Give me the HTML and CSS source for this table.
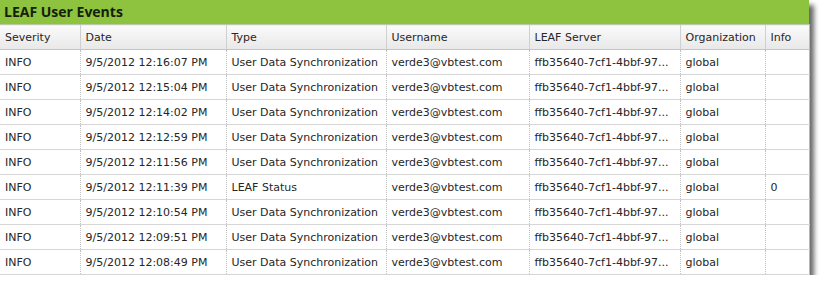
FILE: index.html
```html
<!DOCTYPE html>
<html>
<head>
<meta charset="utf-8">
<link rel="stylesheet" href="styles.css">
</head>
<body>
<div class="panel">
  <div class="title">LEAF User Events</div>
  <table class="grid">
    <colgroup>
      <col class="c1"><col class="c2"><col class="c3"><col class="c4"><col class="c5"><col class="c6"><col class="c7">
    </colgroup>
    <thead>
      <tr><th>Severity</th><th>Date</th><th>Type</th><th>Username</th><th>LEAF Server</th><th>Organization</th><th>Info</th></tr>
    </thead>
    <tbody>
      <tr><td>INFO</td><td>9/5/2012 12:16:07 PM</td><td>User Data Synchronization</td><td>verde3@vbtest.com</td><td>ffb35640-7cf1-4bbf-97...</td><td>global</td><td></td></tr>
      <tr><td>INFO</td><td>9/5/2012 12:15:04 PM</td><td>User Data Synchronization</td><td>verde3@vbtest.com</td><td>ffb35640-7cf1-4bbf-97...</td><td>global</td><td></td></tr>
      <tr><td>INFO</td><td>9/5/2012 12:14:02 PM</td><td>User Data Synchronization</td><td>verde3@vbtest.com</td><td>ffb35640-7cf1-4bbf-97...</td><td>global</td><td></td></tr>
      <tr><td>INFO</td><td>9/5/2012 12:12:59 PM</td><td>User Data Synchronization</td><td>verde3@vbtest.com</td><td>ffb35640-7cf1-4bbf-97...</td><td>global</td><td></td></tr>
      <tr><td>INFO</td><td>9/5/2012 12:11:56 PM</td><td>User Data Synchronization</td><td>verde3@vbtest.com</td><td>ffb35640-7cf1-4bbf-97...</td><td>global</td><td></td></tr>
      <tr><td>INFO</td><td>9/5/2012 12:11:39 PM</td><td>LEAF Status</td><td>verde3@vbtest.com</td><td>ffb35640-7cf1-4bbf-97...</td><td>global</td><td>0</td></tr>
      <tr><td>INFO</td><td>9/5/2012 12:10:54 PM</td><td>User Data Synchronization</td><td>verde3@vbtest.com</td><td>ffb35640-7cf1-4bbf-97...</td><td>global</td><td></td></tr>
      <tr><td>INFO</td><td>9/5/2012 12:09:51 PM</td><td>User Data Synchronization</td><td>verde3@vbtest.com</td><td>ffb35640-7cf1-4bbf-97...</td><td>global</td><td></td></tr>
      <tr><td>INFO</td><td>9/5/2012 12:08:49 PM</td><td>User Data Synchronization</td><td>verde3@vbtest.com</td><td>ffb35640-7cf1-4bbf-97...</td><td>global</td><td></td></tr>
    </tbody>
  </table>
</div>
</body>
</html>
```
FILE: styles.css
```css
html, body {
  margin: 0;
  padding: 0;
  background: #ffffff;
}
body {
  font-family: "DejaVu Sans", Verdana, sans-serif;
  font-size: 11px;
  color: #262626;
}
.panel {
  width: 809px;
  background: #ffffff;
  box-shadow: 5px 5px 5px rgba(0, 0, 0, 0.6);
}
.title {
  height: 24px;
  line-height: 24px;
  background: #8dc33e;
  color: #16200c;
  font-family: "Open Sans", "DejaVu Sans", sans-serif;
  font-weight: 700;
  font-size: 14px;
  padding-left: 4px;
  box-sizing: border-box;
}
.grid {
  width: 809px;
  border-collapse: collapse;
  table-layout: fixed;
}
.c1 { width: 80px; }
.c2 { width: 146px; }
.c3 { width: 160px; }
.c4 { width: 143px; }
.c5 { width: 151px; }
.c6 { width: 85px; }
.c7 { width: 44px; }
.grid th {
  height: 25px;
  padding: 0 0 0 5px;
  text-align: left;
  font-weight: normal;
  color: #262626;
  background: linear-gradient(#fafafa, #e8e8e8);
  border-left: 1px solid #d0d0d0;
  border-bottom: 1px solid #c4c4c4;
  border-top: 1px solid #b8c8a8;
  box-sizing: border-box;
  white-space: nowrap;
  overflow: hidden;
}
.grid td {
  height: 25px;
  padding: 0 0 0 5px;
  border-left: 1px dotted #c0c0c0;
  border-bottom: 1px solid #d6d6d6;
  box-sizing: border-box;
  white-space: nowrap;
  overflow: hidden;
}
.grid th:first-child,
.grid td:first-child {
  border-left: none;
}
.grid th:last-child,
.grid td:last-child {
  border-right: 1px solid #b8b8b8;
}
```
